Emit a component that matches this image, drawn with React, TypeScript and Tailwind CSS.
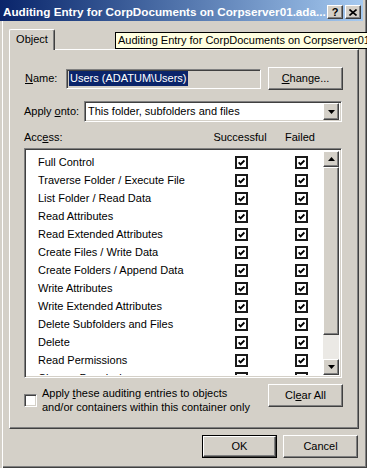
import React from 'react';

const raised =
  'border border-t-white border-l-white border-r-[#404040] border-b-[#404040] shadow-[inset_-1px_-1px_0_#808080] bg-[#d4d0c8]';
const sunken =
  'border border-t-[#808080] border-l-[#808080] border-r-white border-b-white shadow-[inset_1px_1px_0_#404040,inset_-1px_-1px_0_#d4d0c8]';

const rows = [
  'Full Control',
  'Traverse Folder / Execute File',
  'List Folder / Read Data',
  'Read Attributes',
  'Read Extended Attributes',
  'Create Files / Write Data',
  'Create Folders / Append Data',
  'Write Attributes',
  'Write Extended Attributes',
  'Delete Subfolders and Files',
  'Delete',
  'Read Permissions',
  'Change Permissions',
];

const Check = () => (
  <div className="w-[13px] h-[13px] border-2 border-[#1a1a1a] bg-white flex items-center justify-center shrink-0">
    <svg width="7" height="7" viewBox="0 0 7 7">
      <polyline points="0.6,3.3 2.6,5.3 6.4,1.4" fill="none" stroke="#000" strokeWidth="1.9" />
    </svg>
  </div>
);

const Arrow = ({ up }: { up?: boolean }) => (
  <svg width="7" height="4" viewBox="0 0 7 4">
    <polygon points={up ? '3.5,0 7,4 0,4' : '0,0 7,0 3.5,4'} fill="#000" />
  </svg>
);

const Btn = ({ children, def }: { children: React.ReactNode; def?: boolean }) =>
  def ? (
    <div className="w-[75px] h-[23px] border border-black">
      <div className={`${raised} w-full h-full flex items-center justify-center`}>{children}</div>
    </div>
  ) : (
    <div className={`${raised} w-[75px] h-[23px] flex items-center justify-center`}>{children}</div>
  );

const U = ({ children }: { children: React.ReactNode }) => (
  <span className="underline underline-offset-[1px]">{children}</span>
);

export default function App() {
  return (
    <div className="relative w-[367px] h-[468px] overflow-hidden bg-[#d4d0c8] text-[11px] leading-none text-black font-['Liberation_Sans',Arial,sans-serif] flex flex-col shadow-[inset_2px_0_0_#d4d0c8,inset_3px_0_0_#ffffff,inset_-1px_-1px_0_#404040,inset_-2px_-2px_0_#808080]">
      {/* title bar */}
      <div className="h-[21px] mr-[4px] flex items-center pl-[3px] pr-[2px] pt-[4px] pb-[1px] bg-gradient-to-r from-[#0a246a] to-[#a6caf0]">
        <div className="flex-1 text-white font-bold text-[11.7px] whitespace-nowrap overflow-hidden">
          Auditing Entry for CorpDocuments on Corpserver01.ada...
        </div>
        <div className={`${raised} w-[16px] h-[14px] flex items-center justify-center font-bold text-[11px]`}>?</div>
        <div className={`${raised} ml-[2px] w-[16px] h-[14px] flex items-center justify-center`}>
          <svg width="8" height="7" viewBox="0 0 8 7">
            <path d="M0.5 0.5 L7.5 6.5 M7.5 0.5 L0.5 6.5" stroke="#000" strokeWidth="1.6" />
          </svg>
        </div>
      </div>

      {/* tab */}
      <div className="mt-[8px] ml-[9px] flex">
        <div className="relative z-10 -mb-px w-[46px] h-[21px] bg-[#d4d0c8] border-t border-l border-r border-t-white border-l-white border-r-[#404040] shadow-[inset_-1px_0_0_#808080] rounded-t-[2px] flex items-center justify-center pb-[2px]">
          Object
        </div>
      </div>

      {/* panel */}
      <div className={`${raised} ml-[9px] w-[350px] h-[380px] pl-[14px] pr-[15px] pt-[17px] flex flex-col`}>
        {/* name row */}
        <div className="flex items-center h-[23px]">
          <div className="w-[42px] pl-px">
            <U>N</U>ame:
          </div>
          <div className={`${sunken} w-[195px] h-[20px] flex items-center pl-[2px]`}>
            <span className="bg-[#0a246a] text-white px-px py-[2px]">Users (ADATUM\Users)</span>
          </div>
          <div className="ml-[7px]">
            <Btn>
              <U>C</U>hange...
            </Btn>
          </div>
        </div>

        {/* apply onto */}
        <div className="flex items-center h-[21px] mt-[11px]">
          <div className="w-[60px]">
            Apply <U>o</U>nto:
          </div>
          <div className={`${sunken} bg-white w-[258px] h-[21px] flex items-center pl-[3px] pr-[2px]`}>
            <span className="flex-1">This folder, subfolders and files</span>
            <div className={`${raised} w-[16px] h-[17px] flex items-center justify-center`}>
              <Arrow />
            </div>
          </div>
        </div>

        {/* header */}
        <div className="flex items-center h-[14px] mt-[8px]">
          <div className="w-[186px]">
            Acc<U>e</U>ss:
          </div>
          <div className="w-[60px] text-center">Successful</div>
          <div className="w-[60px] text-center">Failed</div>
        </div>

        {/* list */}
        <div className={`${sunken} bg-white mt-[4px] w-[318px] h-[230px] p-[2px] flex`}>
          <div className="flex-1 overflow-hidden pt-[2px]">
            {rows.map((r) => (
              <div key={r} className="h-[18px] flex items-center pl-[11px]">
                <div className="w-[197px] whitespace-nowrap">{r}</div>
                <Check />
                <div className="w-[47px]" />
                <Check />
              </div>
            ))}
          </div>
          <div className="w-[16px] flex flex-col">
            <div className={`${raised} h-[16px] flex items-center justify-center`}>
              <Arrow up />
            </div>
            <div className={`${raised} h-[170px]`} />
            <div className="h-[24px] bg-[#ebe9e5]" />
            <div className={`${raised} h-[16px] flex items-center justify-center`}>
              <Arrow />
            </div>
          </div>
        </div>

        {/* bottom row */}
        <div className="flex mt-[6px]">
          <div className={`${sunken} bg-white w-[13px] h-[13px] mt-[10px]`} />
          <div className="ml-[5px] flex-1 leading-[14px] mt-[2px]">
            Apply <U>t</U>hese auditing entries to objects
            <br />
            and/or containers within this container only
          </div>
          <Btn>
            Cl<U>e</U>ar All
          </Btn>
        </div>
      </div>

      {/* buttons */}
      <div className="flex justify-end gap-[6px] mt-[6px] pr-[9px]">
        <Btn def>OK</Btn>
        <Btn>Cancel</Btn>
      </div>

      {/* tooltip */}
      <div className="absolute left-[115px] top-[32px] h-[17px] border border-black bg-[#ffffe1] px-[2px] flex items-center whitespace-nowrap">
        Auditing Entry for CorpDocuments on Corpserver01
      </div>
    </div>
  );
}
